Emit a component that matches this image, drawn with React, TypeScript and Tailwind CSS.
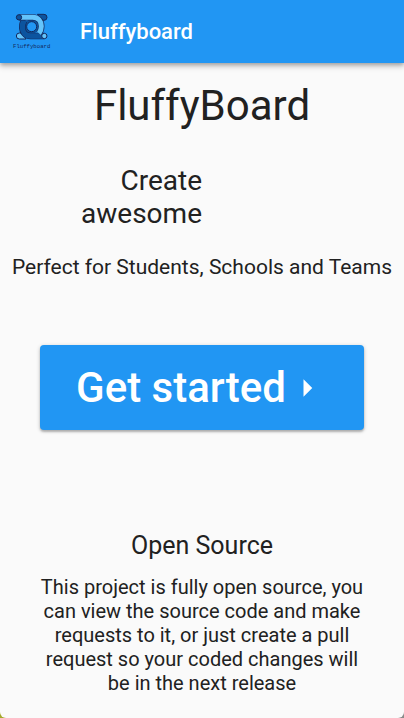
import { useState } from "react";

function Logo() {
  return (
    <svg viewBox="36 36 120 117" className="h-[39px] w-10" role="img" aria-label="Fluffyboard logo">
      {/* corner pieces behind the bands */}
      <path d="M112 43h20a9 9 0 0 1 0 18h-8z" fill="#0c549f" stroke="#14295c" strokeWidth="3" />
      <path d="M78 117H58a9 9 0 0 1 0-18h8z" fill="#64c4fb" stroke="#14295c" strokeWidth="3" />
      <circle cx="95" cy="80" r="22" fill="#0c549f" />
      <g fill="none">
        <path d="M133 108H92C76 108 67 96 67 81C67 74 69 66 74 60" stroke="#14295c" strokeWidth="20" />
        <path d="M133 108H92C76 108 67 96 67 81C67 74 69 66 74 60" stroke="#0c549f" strokeWidth="16" />
        <path d="M57 52H98C115 52 124 64 124 79C124 86 122 94 117 100" stroke="#14295c" strokeWidth="19" />
        <path d="M57 52H98C115 52 124 64 124 79C124 86 122 94 117 100" stroke="#64c4fb" strokeWidth="15" />
      </g>
      <circle cx="95" cy="80" r="15" fill="#2196f3" stroke="#14295c" strokeWidth="3" />
      <circle cx="57" cy="52" r="8" fill="#0c549f" stroke="#14295c" strokeWidth="3" />
      <circle cx="133" cy="108" r="8" fill="#64c4fb" stroke="#14295c" strokeWidth="3" />
      <text x="95" y="143" textAnchor="middle" fontSize="17" fill="#14295c" className="font-['Liberation_Mono',monospace]">
        Fluffyboard
      </text>
    </svg>
  );
}

function ArrowRight() {
  return (
    <svg viewBox="0 0 24 24" className="size-[42px]" fill="currentColor" aria-hidden="true">
      <path d="M10 17l5-5-5-5v10z" />
    </svg>
  );
}

export default function App() {
  const [started, setStarted] = useState(false);

  return (
    <div className="bg-linear-to-r from-[#a5a82a] to-[#8a8a8a] font-['Roboto',sans-serif] text-[#212121]">
      <div className="min-h-screen rounded-b-md bg-[#fafafa]">
        <header className="flex h-[63px] items-center bg-[#2196f3] px-3 shadow-[0_2px_4px_rgba(0,0,0,0.25),0_4px_6px_rgba(0,0,0,0.14)]">
          <Logo />
          <span className="ml-7 text-[22px] font-medium text-white">Fluffyboard</span>
        </header>
        <main className="flex flex-col items-center text-center">
          <h1 className="mt-[18px] text-[42px] leading-[50px]">FluffyBoard</h1>
          <div className="mt-[33px] grid w-full grid-cols-2">
            <p className="pl-16 text-right text-[28px] leading-[33px]">Create awesome</p>
          </div>
          <p className="mt-6 text-[21px] leading-[26px]">Perfect for Students, Schools and Teams</p>
          <div className="mt-[65px] w-full px-10">
            <button
              onClick={() => setStarted(!started)}
              aria-pressed={started}
              className="flex h-[85px] w-full items-center justify-center rounded bg-[#2196f3] text-[42px] font-medium text-white shadow-[0_2px_2px_rgba(0,0,0,0.2),0_1px_4px_rgba(0,0,0,0.2)]"
            >
              Get started
              <ArrowRight />
            </button>
          </div>
          <h2 className="mt-[101px] text-[25px] leading-[30px]">Open Source</h2>
          <p className="mt-[14px] px-10 text-xl leading-6">
            This project is fully open source, you can view the source code and make requests to it,
            or just create a pull request so your coded changes will be in the next release
          </p>
        </main>
      </div>
    </div>
  );
}
